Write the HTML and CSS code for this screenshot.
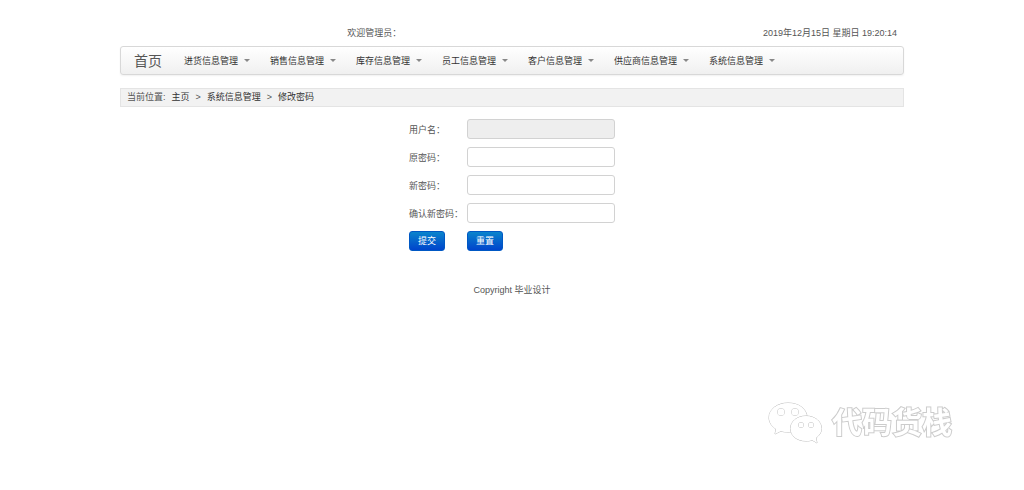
FILE: index.html
```html
<!DOCTYPE html>
<html lang="zh-CN">
<head>
<meta charset="utf-8">
<title>修改密码</title>
<link rel="stylesheet" href="styles.css">
</head>
<body>
<div class="container">
  <header class="topbar">
    <span>欢迎管理员：</span>
    <time datetime="2019-12-15T19:20:14">2019年12月15日 星期日 19:20:14</time>
  </header>
  <nav class="navbar">
    <a class="brand" href="#">首页</a>
    <ul class="menu">
      <li><a href="#">进货信息管理<i class="caret"></i></a></li>
      <li><a href="#">销售信息管理<i class="caret"></i></a></li>
      <li><a href="#">库存信息管理<i class="caret"></i></a></li>
      <li><a href="#">员工信息管理<i class="caret"></i></a></li>
      <li><a href="#">客户信息管理<i class="caret"></i></a></li>
      <li><a href="#">供应商信息管理<i class="caret"></i></a></li>
      <li><a href="#">系统信息管理<i class="caret"></i></a></li>
    </ul>
  </nav>
  <div class="breadcrumb">
    <span>当前位置:</span>
    <a href="#">主页</a>
    <span>&gt;</span>
    <a href="#">系统信息管理</a>
    <span>&gt;</span>
    <a href="#">修改密码</a>
  </div>
  <form class="form">
    <label for="user">用户名：</label>
    <input id="user" type="text" disabled>
    <label for="old">原密码：</label>
    <input id="old" type="password">
    <label for="new">新密码：</label>
    <input id="new" type="password">
    <label for="confirm">确认新密码：</label>
    <input id="confirm" type="password">
    <button class="btn" type="submit">提交</button>
    <button class="btn" type="reset">重置</button>
  </form>
  <footer class="footer">Copyright 毕业设计</footer>
</div>
<div class="watermark">
  <svg width="54" height="42" viewBox="0 0 54 42" fill="#fff" stroke="#bbb" stroke-width="1">
    <path d="M20 1C9 1 1 7.500 1 15.500C1 20.500 4 24.500 8 27L7 32L13 29C15 30 18 30 21 30C31 30 39 23.500 39 15.500C39 7 31 1 20 1Z"/>
    <circle cx="13" cy="10" r="3.500"/>
    <circle cx="27" cy="10" r="3.500"/>
    <path d="M38 14C29 14 22.500 19.500 22.500 26.500C22.500 34 29 39 38 39C40 39 42 39 44 38L49 41L48 36C51 33.500 53.500 31 53.500 26.500C53.500 19.500 47 14 38 14Z"/>
    <circle cx="33" cy="23" r="2.500"/>
    <circle cx="43" cy="23" r="2.500"/>
  </svg>
  <span>代码货栈</span>
</div>
</body>
</html>
```
FILE: styles.css
```css
* {
  box-sizing: border-box;
}

body {
  margin: 0;
  background: #fff;
  color: #555;
  font-family: "Liberation Sans", "Noto Sans CJK SC", sans-serif;
  font-size: 9px;
  line-height: 14px;
}

a {
  color: #333;
  text-decoration: none;
}

.container {
  max-width: 784px;
  margin: 0 auto;
  padding-top: 26px;
}

.topbar {
  display: flex;
  justify-content: space-between;
  padding: 0 7px 0 29%;
}

.navbar {
  display: flex;
  align-items: center;
  height: 29px;
  margin-top: 6px;
  padding: 0 13px;
  border: 1px solid #d8d8d8;
  border-radius: 3px;
  background: linear-gradient(#fff, #f0f0f0);
  box-shadow: 0 1px 2px rgba(0, 0, 0, 0.06);
}

.brand {
  margin-right: 22px;
  color: #555;
  font-size: 14px;
}

.menu {
  display: flex;
  margin: 0;
  padding: 0;
  list-style: none;
}

.menu a {
  display: flex;
  align-items: center;
  padding-right: 20px;
}

.caret {
  margin-left: 6px;
  border: 3px solid transparent;
  border-top-color: #888;
  border-bottom: 0;
}

.breadcrumb {
  display: flex;
  gap: 6px;
  margin-top: 13px;
  padding: 1px 6px 2px;
  border: 1px solid #e4e4e4;
  background: #f2f2f2;
}

.form {
  display: grid;
  grid-template-columns: 58px 148px;
  grid-auto-rows: 20px;
  row-gap: 8px;
  justify-content: center;
  align-items: center;
  margin-top: 12px;
}

.form label {
  padding-top: 2px;
  white-space: nowrap;
}

.form input {
  width: 100%;
  height: 20px;
  padding: 2px 4px;
  border: 1px solid #d2d2d2;
  border-radius: 3px;
  background: #fff;
  font: inherit;
}

.form input:disabled {
  background: #eee;
}

.btn {
  width: 36px;
  height: 20px;
  padding: 0;
  border: 1px solid #0058c4;
  border-radius: 3px;
  background: linear-gradient(#0a84cc, #0044cc);
  color: #fff;
  font: inherit;
}

.footer {
  margin-top: 32px;
  text-align: center;
}

.watermark {
  position: fixed;
  right: 72px;
  bottom: 46px;
  display: flex;
  align-items: center;
  gap: 10px;
  color: #fff;
  font-size: 30px;
  font-weight: 700;
  line-height: 42px;
  -webkit-text-stroke: 2px #ccc;
  paint-order: stroke fill;
}
```
